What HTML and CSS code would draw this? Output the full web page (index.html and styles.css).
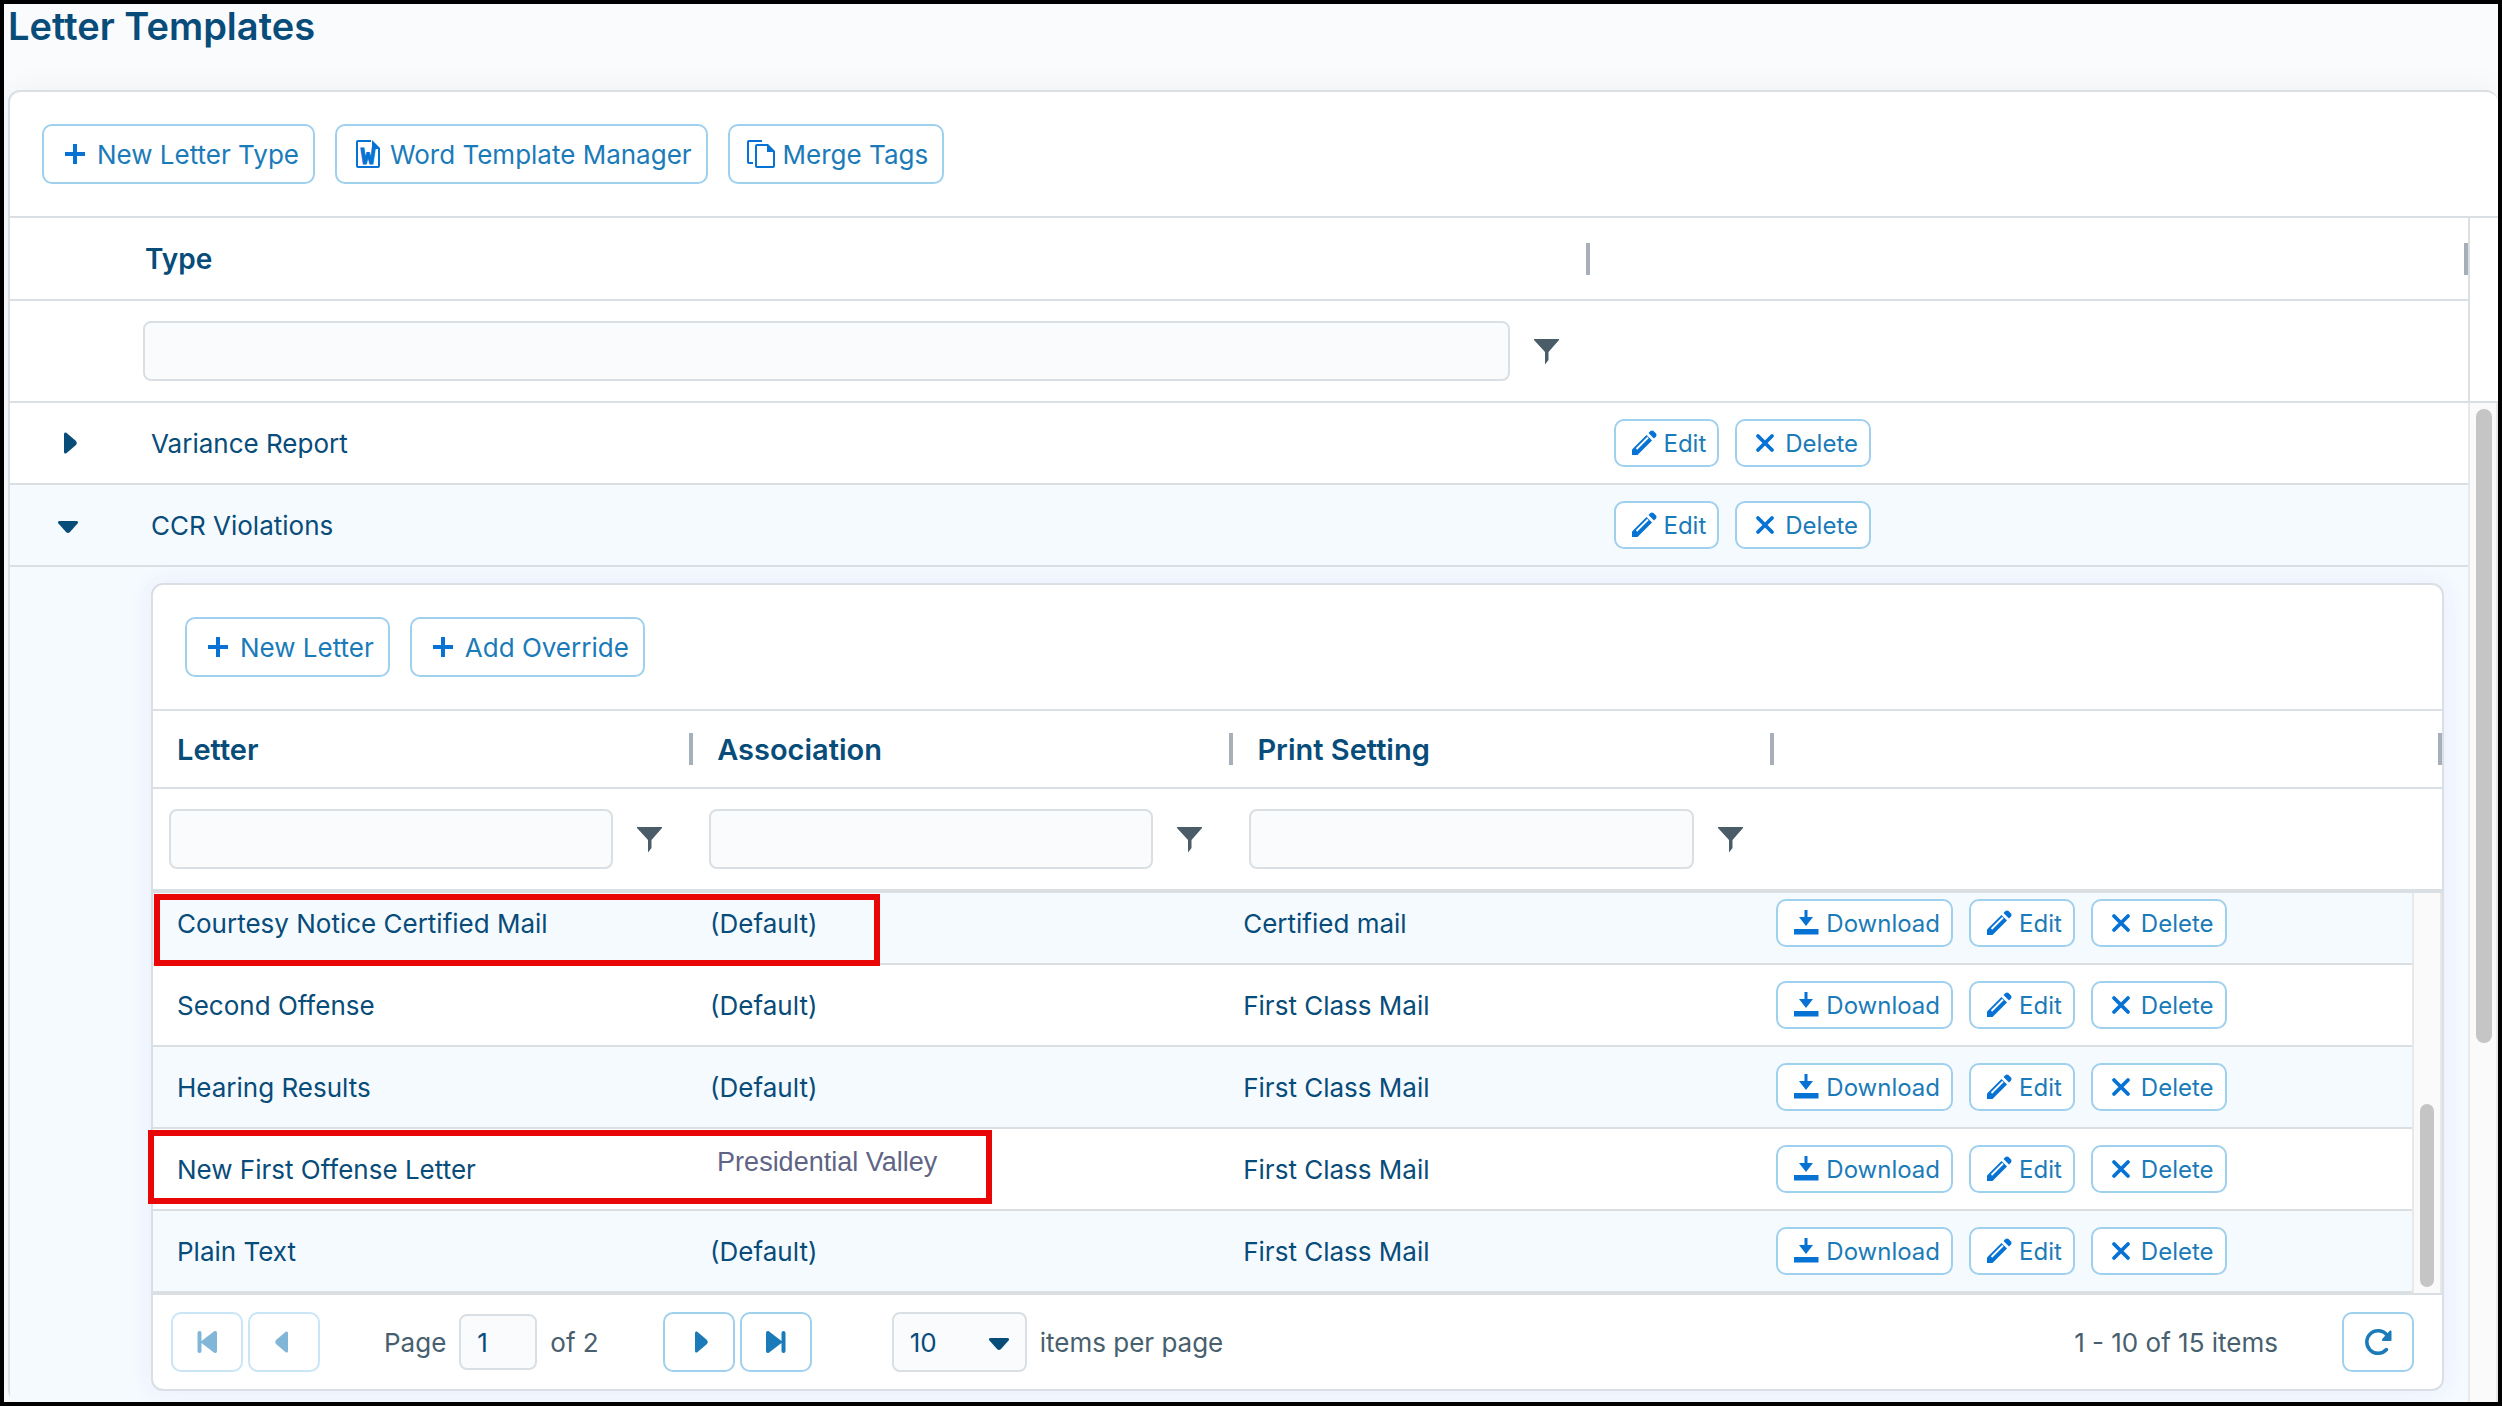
FILE: index.html
```html
<!DOCTYPE html>
<html lang="en">
<head>
    <meta charset="UTF-8">
    <meta name="viewport" content="width=device-width, initial-scale=1.0">
    <title>Letter Templates</title>
    <link rel="stylesheet" href="styles.css">
</head>
<body>
    <!-- Icons -->
    <svg class="sprite" aria-hidden="true">
        <symbol id="plus" viewBox="0 0 32 32"><path d="M6 14h8V6h4v8h8v4h-8v8h-4v-8H6z"/></symbol>
        <symbol id="word" viewBox="0 0 32 32">
            <path d="M19 3H6a1 1 0 0 0-1 1v24a1 1 0 0 0 1 1h20a1 1 0 0 0 1-1V11" fill="none" stroke="currentColor" stroke-width="2"/>
            <path d="M20 2l8 8v1h-8z"/>
            <text x="16" y="26" text-anchor="middle" class="word-mark">W</text>
        </symbol>
        <symbol id="copy" viewBox="0 0 32 32">
            <path d="M17 3H4a1 1 0 0 0-1 1v20a1 1 0 0 0 1 1h4" fill="none" stroke="currentColor" stroke-width="2"/>
            <path d="M23 7H12a1 1 0 0 0-1 1v20a1 1 0 0 0 1 1h16a1 1 0 0 0 1-1V13" fill="none" stroke="currentColor" stroke-width="2"/>
            <path d="M22 6h1l7 7v1h-8z"/>
        </symbol>
        <symbol id="pencil" viewBox="0 0 32 32">
            <path d="M4 28v-5.500L18.500 8l5.500 5.500L9.500 28z"/>
            <path d="M8.500 22L20 10.500" fill="none" stroke="#fff" stroke-width="1.800"/>
            <path d="M20.500 6l2-2q1.500-1.200 3 0l2.500 2.500q1.200 1.500 0 3l-2 2z"/>
        </symbol>
        <symbol id="cross" viewBox="0 0 32 32"><path d="M9 9l14 14m0-14l-14 14" fill="none" stroke="currentColor" stroke-width="3.800" stroke-linecap="round"/></symbol>
        <symbol id="download" viewBox="0 0 32 32"><path d="M14.500 3h3v7H23l-7 9-7-9h5.500zM4 22h24.500v5.500H4z"/></symbol>
        <symbol id="filter" viewBox="0 0 32 32"><path d="M4 4h25v1L18.500 17v8L15 29.500V17L4 5z"/></symbol>
        <symbol id="right" viewBox="0 0 32 32"><path d="M12 7q0-2 2-1.500L24 14q1.800 2 0 4l-10 8.500q-2 .5-2-1.500z"/></symbol>
        <symbol id="left" viewBox="0 0 32 32"><path d="M20 7q0-2-2-1.500L8 14q-1.800 2 0 4l10 8.500q2 .5 2-1.500z"/></symbol>
        <symbol id="down" viewBox="0 0 32 32"><path d="M7.500 12q-2 0-1.500 2l8 9q2 1.800 4 0l8-9q.5-2-1.500-2z"/></symbol>
        <symbol id="first" viewBox="0 0 32 32"><path d="M6.500 7q0-2 2-2t2 2v8L23.500 5q2.500-.5 2.500 2v18q0 2.500-2.500 2l-13-10v8q0 2-2 2t-2-2z"/></symbol>
        <symbol id="last" viewBox="0 0 32 32"><path d="M25.500 7q0-2-2-2t-2 2v8L8.500 5Q6 4.500 6 7v18q0 2.500 2.500 2l13-10v8q0 2 2 2t2-2z"/></symbol>
        <symbol id="reload" viewBox="0 0 32 32">
            <path d="M24.500 23.500A11.300 11.300 0 1 1 25 9" fill="none" stroke="currentColor" stroke-width="3.500" stroke-linecap="round"/>
            <path d="M28 4.500q1.500-.5 1.500 1V14q0 1-1 1H21q-2-.5-.8-2z"/>
        </symbol>
    </svg>

    <h1>Letter Templates</h1>

    <main class="grid">
        <div class="toolbar">
            <button type="button" class="btn"><svg><use href="#plus"/></svg>New Letter Type</button>
            <button type="button" class="btn"><svg><use href="#word"/></svg>Word Template Manager</button>
            <button type="button" class="btn"><svg><use href="#copy"/></svg>Merge Tags</button>
        </div>

        <div class="grid-head with-gutter">
            <table class="types">
                <colgroup><col class="col-expand"><col class="col-type"><col></colgroup>
                <tr class="titles"><th></th><th class="resize">Type</th><th class="resize"></th></tr>
                <tr class="filters">
                    <td></td>
                    <td>
                        <div class="filter">
                            <input type="text" aria-label="Filter by type">
                            <button type="button" aria-label="Filter"><svg><use href="#filter"/></svg></button>
                        </div>
                    </td>
                    <td></td>
                </tr>
            </table>
        </div>

        <div class="grid-body">
            <table class="types">
                <colgroup><col class="col-expand"><col class="col-type"><col></colgroup>
                <tr class="row">
                    <td class="expand"><button type="button" aria-label="Expand"><svg><use href="#right"/></svg></button></td>
                    <td>Variance Report</td>
                    <td><div class="actions">
                        <button type="button" class="btn small"><svg><use href="#pencil"/></svg>Edit</button>
                        <button type="button" class="btn small"><svg><use href="#cross"/></svg>Delete</button>
                    </div></td>
                </tr>
                <tr class="row alt">
                    <td class="expand"><button type="button" aria-label="Collapse"><svg><use href="#down"/></svg></button></td>
                    <td>CCR Violations</td>
                    <td><div class="actions">
                        <button type="button" class="btn small"><svg><use href="#pencil"/></svg>Edit</button>
                        <button type="button" class="btn small"><svg><use href="#cross"/></svg>Delete</button>
                    </div></td>
                </tr>
                <tr class="alt">
                    <td></td>
                    <td colspan="2" class="detail">
                        <div class="grid nested">
                            <div class="toolbar">
                                <button type="button" class="btn"><svg><use href="#plus"/></svg>New Letter</button>
                                <button type="button" class="btn"><svg><use href="#plus"/></svg>Add Override</button>
                            </div>

                            <div class="grid-head">
                                <table class="letters">
                                    <colgroup><col class="col-letter"><col class="col-letter"><col class="col-letter"><col></colgroup>
                                    <tr class="titles">
                                        <th class="resize">Letter</th>
                                        <th class="resize">Association</th>
                                        <th class="resize">Print Setting</th>
                                        <th class="resize"></th>
                                    </tr>
                                    <tr class="filters">
                                        <td><div class="filter">
                                            <input type="text" aria-label="Filter by letter">
                                            <button type="button" aria-label="Filter"><svg><use href="#filter"/></svg></button>
                                        </div></td>
                                        <td><div class="filter">
                                            <input type="text" aria-label="Filter by association">
                                            <button type="button" aria-label="Filter"><svg><use href="#filter"/></svg></button>
                                        </div></td>
                                        <td><div class="filter">
                                            <input type="text" aria-label="Filter by print setting">
                                            <button type="button" aria-label="Filter"><svg><use href="#filter"/></svg></button>
                                        </div></td>
                                        <td></td>
                                    </tr>
                                </table>
                            </div>

                            <div class="grid-body">
                                <table class="letters">
                                    <colgroup><col class="col-letter"><col class="col-letter"><col class="col-letter"><col></colgroup>
                                    <tr class="row alt">
                                        <td>Courtesy Notice Certified Mail</td><td>(Default)</td><td>Certified mail</td>
                                        <td><div class="actions">
                                            <button type="button" class="btn small"><svg><use href="#download"/></svg>Download</button>
                                            <button type="button" class="btn small"><svg><use href="#pencil"/></svg>Edit</button>
                                            <button type="button" class="btn small"><svg><use href="#cross"/></svg>Delete</button>
                                        </div></td>
                                    </tr>
                                    <tr class="row">
                                        <td>Second Offense</td><td>(Default)</td><td>First Class Mail</td>
                                        <td><div class="actions">
                                            <button type="button" class="btn small"><svg><use href="#download"/></svg>Download</button>
                                            <button type="button" class="btn small"><svg><use href="#pencil"/></svg>Edit</button>
                                            <button type="button" class="btn small"><svg><use href="#cross"/></svg>Delete</button>
                                        </div></td>
                                    </tr>
                                    <tr class="row alt">
                                        <td>Hearing Results</td><td>(Default)</td><td>First Class Mail</td>
                                        <td><div class="actions">
                                            <button type="button" class="btn small"><svg><use href="#download"/></svg>Download</button>
                                            <button type="button" class="btn small"><svg><use href="#pencil"/></svg>Edit</button>
                                            <button type="button" class="btn small"><svg><use href="#cross"/></svg>Delete</button>
                                        </div></td>
                                    </tr>
                                    <tr class="row">
                                        <td>New First Offense Letter</td><td class="override">Presidential Valley</td><td>First Class Mail</td>
                                        <td><div class="actions">
                                            <button type="button" class="btn small"><svg><use href="#download"/></svg>Download</button>
                                            <button type="button" class="btn small"><svg><use href="#pencil"/></svg>Edit</button>
                                            <button type="button" class="btn small"><svg><use href="#cross"/></svg>Delete</button>
                                        </div></td>
                                    </tr>
                                    <tr class="row alt">
                                        <td>Plain Text</td><td>(Default)</td><td>First Class Mail</td>
                                        <td><div class="actions">
                                            <button type="button" class="btn small"><svg><use href="#download"/></svg>Download</button>
                                            <button type="button" class="btn small"><svg><use href="#pencil"/></svg>Edit</button>
                                            <button type="button" class="btn small"><svg><use href="#cross"/></svg>Delete</button>
                                        </div></td>
                                    </tr>
                                </table>
                                <div class="scrollbar"><div class="thumb"></div></div>
                                <div class="highlight highlight-default"></div>
                                <div class="highlight highlight-override"></div>
                            </div>

                            <div class="pager">
                                <div class="pager-nav">
                                    <button type="button" class="btn" disabled aria-label="First page"><svg><use href="#first"/></svg></button>
                                    <button type="button" class="btn" disabled aria-label="Previous page"><svg><use href="#left"/></svg></button>
                                </div>
                                <div class="pager-field">
                                    <label for="page">Page</label>
                                    <input type="text" id="page" value="1">
                                    <span>of 2</span>
                                </div>
                                <div class="pager-nav">
                                    <button type="button" class="btn" aria-label="Next page"><svg><use href="#right"/></svg></button>
                                    <button type="button" class="btn" aria-label="Last page"><svg><use href="#last"/></svg></button>
                                </div>
                                <div class="pager-field sizes">
                                    <div class="select">
                                        <select id="page-size"><option>5</option><option selected>10</option><option>20</option></select>
                                        <svg><use href="#down"/></svg>
                                    </div>
                                    <label for="page-size">items per page</label>
                                </div>
                                <span class="pager-info">1 - 10 of 15 items</span>
                                <button type="button" class="btn" aria-label="Refresh"><svg><use href="#reload"/></svg></button>
                            </div>
                        </div>
                    </td>
                </tr>
            </table>
            <div class="scrollbar"><div class="thumb"></div></div>
        </div>
    </main>
</body>
</html>
```
FILE: styles.css
```css
*,
*::after {
    box-sizing: border-box;
}

body {
    margin: 0;
    height: 100vh;
    overflow: hidden;
    display: flex;
    flex-direction: column;
    border: 4px solid #000;
    background-color: #fafbfd;
    color: #084c7a;
    font-family: Inter, "Liberation Sans", sans-serif;
    font-size: 26px;
}

.sprite {
    display: none;
}

svg {
    width: 32px;
    height: 32px;
    flex: none;
    fill: currentColor;
}

.word-mark {
    font-family: "Liberation Mono", monospace;
    font-weight: bold;
    font-size: 24px;
    stroke: currentColor;
    stroke-width: 1px;
}

h1 {
    margin: 0;
    padding: 0 4px;
    height: 86px;
    font-size: 38px;
    font-weight: 600;
    line-height: 44px;
}

button,
input,
select {
    font: inherit;
    color: inherit;
}

button {
    cursor: pointer;
}

/* Grid */
.grid {
    border: 2px solid #dadfe3;
    border-radius: 12px;
    background-color: #fff;
    box-shadow: 0 0 32px rgba(0, 0, 30, 0.05);
}

main.grid {
    flex: 1;
    min-height: 0;
    margin-left: 4px;
    border-right: 0;
    border-bottom: 0;
    display: flex;
    flex-direction: column;
}

.toolbar {
    display: flex;
    gap: 20px;
    padding: 32px;
    border-bottom: 2px solid #dadfe3;
}

.btn {
    display: inline-flex;
    align-items: center;
    justify-content: center;
    gap: 6px;
    height: 60px;
    padding: 0 14px 0 15px;
    border: 2px solid #9fd0ee;
    border-radius: 10px;
    background-color: #fff;
    color: #1b7bb9;
    white-space: nowrap;
}

.btn svg {
    color: #0672d4;
}

.btn.small {
    height: 48px;
    padding: 0 11px 0 12px;
    gap: 4px;
    font-size: 24px;
}

.actions {
    display: flex;
    gap: 16px;
}

table {
    width: 100%;
    table-layout: fixed;
    border-collapse: separate;
    border-spacing: 0;
}

th,
td {
    padding: 0;
    text-align: left;
}

.col-expand {
    width: 117px;
}

.col-type {
    width: 59.5%;
}

.col-letter {
    width: 23.6%;
}

.titles th {
    position: relative;
    height: 83px;
    padding: 0 18px;
    border-bottom: 2px solid #dadfe3;
    font-size: 28px;
    font-weight: 600;
}

.nested .titles th {
    height: 78px;
    padding: 0 24px;
    font-size: 29px;
}

/* Column resize handles */
.resize::after {
    content: "";
    position: absolute;
    right: 0;
    top: calc(50% - 16px);
    width: 4px;
    height: 32px;
    background-color: #a7b0b8;
}

.filters td {
    padding: 20px 16px;
    border-bottom: 2px solid #dadfe3;
}

.nested .filters td {
    border-bottom-width: 4px;
}

.filter {
    display: flex;
    gap: 8px;
}

.filter input {
    flex: 1;
    min-width: 0;
    height: 60px;
    padding: 0 16px;
    border: 2px solid #dadfe3;
    border-radius: 8px;
    background-color: #fafbfd;
}

.filter button {
    width: 56px;
    padding: 0;
    border: 0;
    background: none;
    color: #4a5c68;
    display: flex;
    align-items: center;
    justify-content: center;
}

.grid-head.with-gutter {
    display: flex;
}

.with-gutter::after {
    content: "";
    flex: none;
    width: 30px;
    border-left: 2px solid #dadfe3;
    border-bottom: 2px solid #dadfe3;
}

.with-gutter table,
.grid-body table {
    flex: 1;
    min-width: 0;
}

.grid-body {
    display: flex;
    align-items: flex-start;
}

main > .grid-body {
    flex: 1;
    min-height: 0;
}

.row td {
    height: 82px;
    padding: 0 24px;
    border-bottom: 2px solid #dadfe3;
}

.alt {
    background-color: #f5faff;
}

.row .expand {
    padding: 0 42px;
}

.expand button {
    display: flex;
    padding: 0;
    border: 0;
    background: none;
    color: inherit;
}

.detail {
    padding: 16px 24px;
}

.detail .nested {
    box-shadow: 0 0 24px rgba(60, 60, 220, 0.07);
}

/* Letters list, scrolled down to its last rows */
.nested .grid-body {
    position: relative;
}

.nested .grid-body table {
    margin-top: -10px;
    clip-path: inset(10px 0 0 0);
}

.scrollbar {
    align-self: stretch;
    flex: none;
    width: 30px;
    padding: 6px;
    border: 0 solid #e8e8e8;
    border-left-width: 2px;
    border-right-width: 2px;
    background-color: #fafafa;
}

.thumb {
    width: 16px;
    height: 634px;
    border-radius: 8px;
    background-color: #c5c5c5;
}

.nested .scrollbar {
    display: flex;
    align-items: flex-end;
}

.nested .thumb {
    height: 183px;
}

.row .override {
    padding: 0 24px 14px 31px;
    color: #5f6486;
    font-family: "Liberation Sans", Arial, sans-serif;
    font-size: 27px;
}

.highlight {
    position: absolute;
    border: 6px solid #e90606;
    pointer-events: none;
}

.highlight-default {
    left: 1px;
    top: 1px;
    width: 726px;
    height: 72px;
}

.highlight-override {
    left: -5px;
    top: 237px;
    width: 844px;
    height: 74px;
}

/* Pager */
.pager {
    display: flex;
    align-items: center;
    padding: 17px 28px 17px 18px;
    border-top: 2px solid #dadfe3;
    color: #48606e;
}

.pager .btn {
    width: 72px;
    padding: 0;
}

.pager .btn svg {
    color: inherit;
}

.pager .btn:disabled {
    opacity: 0.55;
}

.pager-nav {
    display: flex;
    gap: 5px;
}

.pager-field {
    display: flex;
    align-items: center;
    gap: 13px;
    margin: 0 64px;
}

.pager-field.sizes {
    margin: 0 0 0 80px;
}

.pager-field input {
    width: 78px;
    height: 56px;
    padding: 0 16px;
    border: 2px solid #dadfe3;
    border-radius: 8px;
    background-color: #fafbfd;
    color: #084c7a;
}

.select {
    position: relative;
    color: #084c7a;
}

.select select {
    appearance: none;
    width: 135px;
    height: 60px;
    padding: 0 16px;
    border: 2px solid #dadfe3;
    border-radius: 8px;
    background-color: #fafbfd;
}

.select svg {
    position: absolute;
    right: 12px;
    top: 14px;
    pointer-events: none;
}

.pager-info {
    margin-left: auto;
    margin-right: 64px;
}
```
